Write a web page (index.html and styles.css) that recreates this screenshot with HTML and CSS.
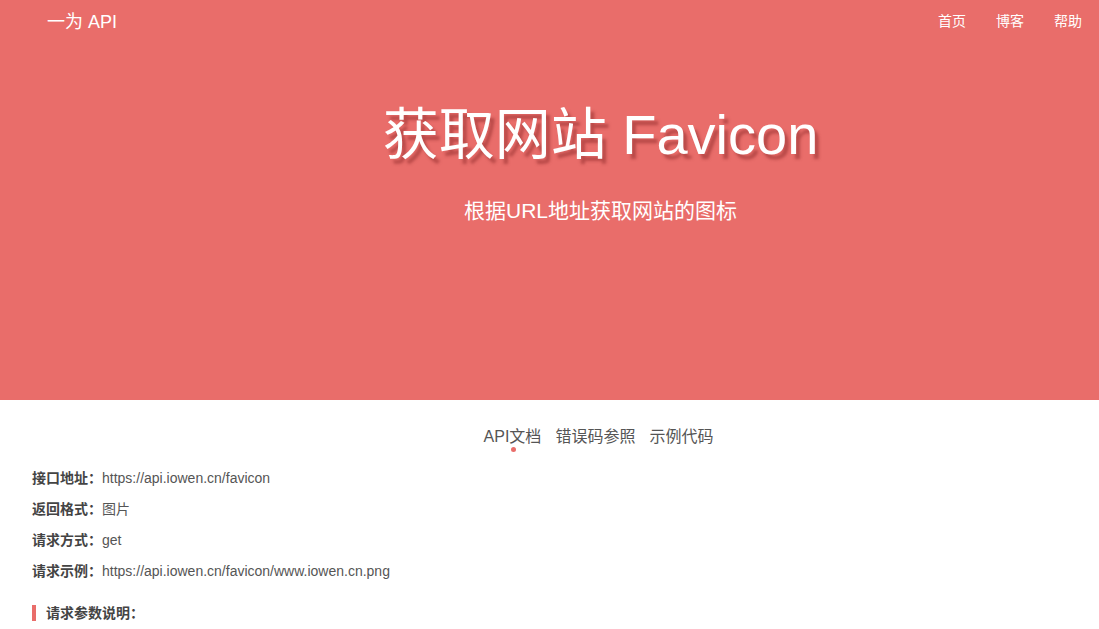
FILE: index.html
```html
<!DOCTYPE html>
<html lang="zh-CN">
<head>
<meta charset="utf-8">
<title>获取网站 Favicon - 一为 API</title>
<link rel="stylesheet" href="styles.css">
</head>
<body>
<header class="hero">
  <nav class="topbar">
    <a class="brand" href="#">一为 API</a>
    <ul class="menu">
      <li><a href="#">首页</a></li>
      <li><a href="#">博客</a></li>
      <li><a href="#">帮助</a></li>
    </ul>
  </nav>
  <div class="hero-body">
    <h1 class="title">获取网站 Favicon</h1>
    <p class="subtitle">根据URL地址获取网站的图标</p>
  </div>
</header>
<main class="content">
  <ul class="tabs">
    <li class="tab active">API文档</li>
    <li class="tab">错误码参照</li>
    <li class="tab">示例代码</li>
  </ul>
  <div class="info">
    <p class="row"><b>接口地址：</b>https://api.iowen.cn/favicon</p>
    <p class="row"><b>返回格式：</b>图片</p>
    <p class="row"><b>请求方式：</b>get</p>
    <p class="row"><b>请求示例：</b>https://api.iowen.cn/favicon/www.iowen.cn.png</p>
  </div>
  <h3 class="section">请求参数说明：</h3>
</main>
</body>
</html>
```
FILE: styles.css
```css
* { box-sizing: border-box; }
html, body { margin: 0; padding: 0; }
body {
  font-family: "Liberation Sans", Arial, "Noto Sans CJK SC", sans-serif;
  background: #fff;
  color: #555;
  overflow: hidden;
}
a { text-decoration: none; color: inherit; }
ul { list-style: none; margin: 0; padding: 0; }

.hero {
  background: #e96d6a;
  height: 400px;
  color: #fff;
}
.topbar {
  display: flex;
  justify-content: space-between;
  align-items: center;
  height: 40px;
  padding: 0 17px 0 47px;
}
.brand {
  font-size: 18px;
  color: #fff;
}
.menu { display: flex; gap: 30px; }
.menu a { font-size: 14px; color: #fff; }

.hero-body {
  text-align: center;
  padding: 60px 0 0 102px;
}
.title {
  margin: 0;
  font-size: 56px;
  font-weight: normal;
  line-height: 70px;
  text-shadow: 4px 5px 3px rgba(140, 40, 40, 0.5);
}
.subtitle {
  margin: 26px 0 0;
  font-size: 21px;
  line-height: 30px;
}

.content { padding: 25px 32px 0; }
.tabs {
  display: flex;
  justify-content: center;
  gap: 14px;
  padding-left: 98px;
}
.tab {
  position: relative;
  font-size: 16px;
  line-height: 24px;
  color: #555;
}
.tab.active::after {
  content: "";
  position: absolute;
  left: 50%;
  bottom: -3px;
  width: 5px;
  height: 5px;
  margin-left: -1px;
  border-radius: 50%;
  background: #e96d6a;
}
.info { margin-top: 20px; }
.row {
  margin: 0 0 12px;
  font-size: 14px;
  line-height: 19px;
  color: #555;
}
.row b { color: #444; }
.section {
  margin: 24px 0 0;
  font-size: 14px;
  line-height: 16px;
  color: #444;
  border-left: 4px solid #e96d6a;
  padding-left: 10px;
}
```
